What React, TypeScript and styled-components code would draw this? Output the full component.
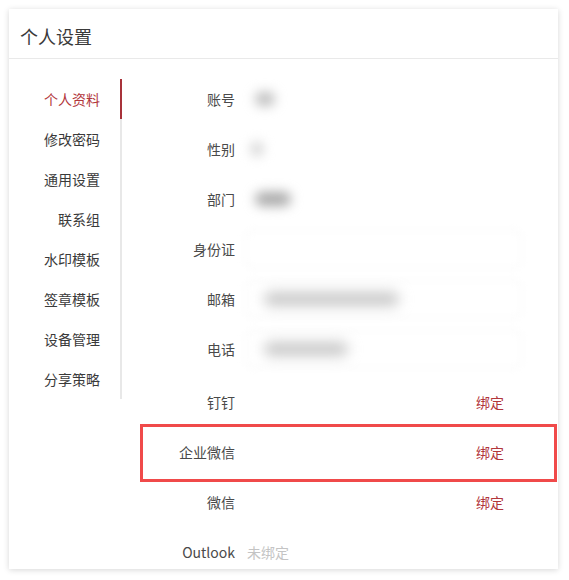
import React from "react";
import styled, { createGlobalStyle } from "styled-components";

const Global = createGlobalStyle`
  html, body { margin: 0; padding: 0; background: #fff; }
  body {
    font-family: "Noto Sans CJK SC", "Noto Sans", "Liberation Sans", sans-serif;
    color: #333;
  }
  * { box-sizing: border-box; }
`;

const Page = styled.div`
  padding: 9px 11px 11px 9px;
`;

const Card = styled.div`
  width: 549px;
  height: 560px;
  background: #fff;
  box-shadow: 0 1px 6px rgba(0, 0, 0, 0.16);
  overflow: hidden;
  display: flex;
  flex-direction: column;
`;

const Header = styled.div`
  height: 50px;
  flex: none;
  display: flex;
  align-items: center;
  padding: 4px 0 0 11px;
  font-size: 18px;
  line-height: 1;
  color: #3a3a3a;
  border-bottom: 1px solid #e9e9e9;
`;

const Body = styled.div`
  display: flex;
  align-items: flex-start;
  padding-top: 20px;
`;

const Side = styled.nav`
  width: 113px;
  flex: none;
  border-right: 2px solid #e8e8e8;
  display: flex;
  flex-direction: column;
`;

const SideItem = styled.div<{ $active?: boolean }>`
  height: 40px;
  margin-right: -2px;
  padding-right: 20px;
  display: flex;
  align-items: center;
  justify-content: flex-end;
  font-size: 14px;
  line-height: 1;
  color: ${(p) => (p.$active ? "#b2363b" : "#3a3a3a")};
  border-right: 2px solid ${(p) => (p.$active ? "#a8323a" : "transparent")};
`;

const Content = styled.div`
  flex: 1;
  margin-left: 18px;
  margin-right: 1px;
  display: flex;
  flex-direction: column;
`;

const Group = styled.div<{ $gap: number; $top?: number }>`
  display: flex;
  flex-direction: column;
  gap: ${(p) => p.$gap}px;
  margin-top: ${(p) => p.$top ?? 0}px;
`;

const Row = styled.div<{ $h?: number; $highlight?: boolean }>`
  position: relative;
  height: ${(p) => p.$h ?? 40}px;
  display: flex;
  align-items: center;
  font-size: 14px;
  line-height: 1;
  ${(p) =>
    p.$highlight
      ? `
    &::after {
      content: "";
      position: absolute;
      left: 0;
      right: 0;
      top: -3px;
      bottom: -5px;
      border: 3px solid #f04a4a;
      pointer-events: none;
    }
  `
      : ""}
`;

const Label = styled.div`
  width: 95px;
  flex: none;
  text-align: right;
  color: #4a4a4a;
`;

const Value = styled.div`
  flex: 1;
  margin-left: 12px;
  display: flex;
  align-items: center;
`;

const Redacted = styled.span<{ $w: number; $c: string; $ml?: number }>`
  display: inline-block;
  width: ${(p) => p.$w}px;
  height: 14px;
  margin-left: ${(p) => p.$ml ?? 0}px;
  border-radius: 7px;
  background: ${(p) => p.$c};
  filter: blur(6px);
`;

const FakeInput = styled.div`
  width: 277px;
  height: 38px;
  margin-left: -2px;
  border: 1px solid #f1f1f1;
  border-radius: 8px;
  display: flex;
  align-items: center;
  padding-left: 18px;
  filter: blur(3px);
`;

const Action = styled.a`
  margin-right: 53px;
  color: #b2363b;
  text-decoration: none;
  cursor: pointer;
`;

const Muted = styled.span`
  color: #c4c4c4;
`;

const navItems = ["个人资料", "修改密码", "通用设置", "联系组", "水印模板", "签章模板", "设备管理", "分享策略"];

export default function App() {
  return (
    <>
      <Global />
      <Page>
        <Card>
          <Header>个人设置</Header>
          <Body>
            <Side>
              {navItems.map((n, i) => (
                <SideItem key={n} $active={i === 0}>
                  {n}
                </SideItem>
              ))}
            </Side>
            <Content>
              <Group $gap={10}>
                <Row>
                  <Label>账号</Label>
                  <Value>
                    <Redacted $w={20} $c="#bdbdbd" $ml={8} />
                  </Value>
                </Row>
                <Row>
                  <Label>性别</Label>
                  <Value>
                    <Redacted $w={12} $c="#d0d0d0" $ml={4} />
                  </Value>
                </Row>
                <Row>
                  <Label>部门</Label>
                  <Value>
                    <Redacted $w={36} $c="#a8a8a8" $ml={8} />
                  </Value>
                </Row>
                <Row>
                  <Label>身份证</Label>
                  <Value>
                    <FakeInput />
                  </Value>
                </Row>
                <Row>
                  <Label>邮箱</Label>
                  <Value>
                    <FakeInput>
                      <Redacted $w={135} $c="#c8c8c8" />
                    </FakeInput>
                  </Value>
                </Row>
                <Row>
                  <Label>电话</Label>
                  <Value>
                    <FakeInput>
                      <Redacted $w={84} $c="#c8c8c8" />
                    </FakeInput>
                  </Value>
                </Row>
              </Group>
              <Group $gap={0} $top={8}>
                <Row $h={50}>
                  <Label>钉钉</Label>
                  <Value />
                  <Action>绑定</Action>
                </Row>
                <Row $h={50} $highlight>
                  <Label>企业微信</Label>
                  <Value />
                  <Action>绑定</Action>
                </Row>
                <Row $h={50}>
                  <Label>微信</Label>
                  <Value />
                  <Action>绑定</Action>
                </Row>
                <Row $h={50}>
                  <Label>Outlook</Label>
                  <Value>
                    <Muted>未绑定</Muted>
                  </Value>
                </Row>
              </Group>
            </Content>
          </Body>
        </Card>
      </Page>
    </>
  );
}
